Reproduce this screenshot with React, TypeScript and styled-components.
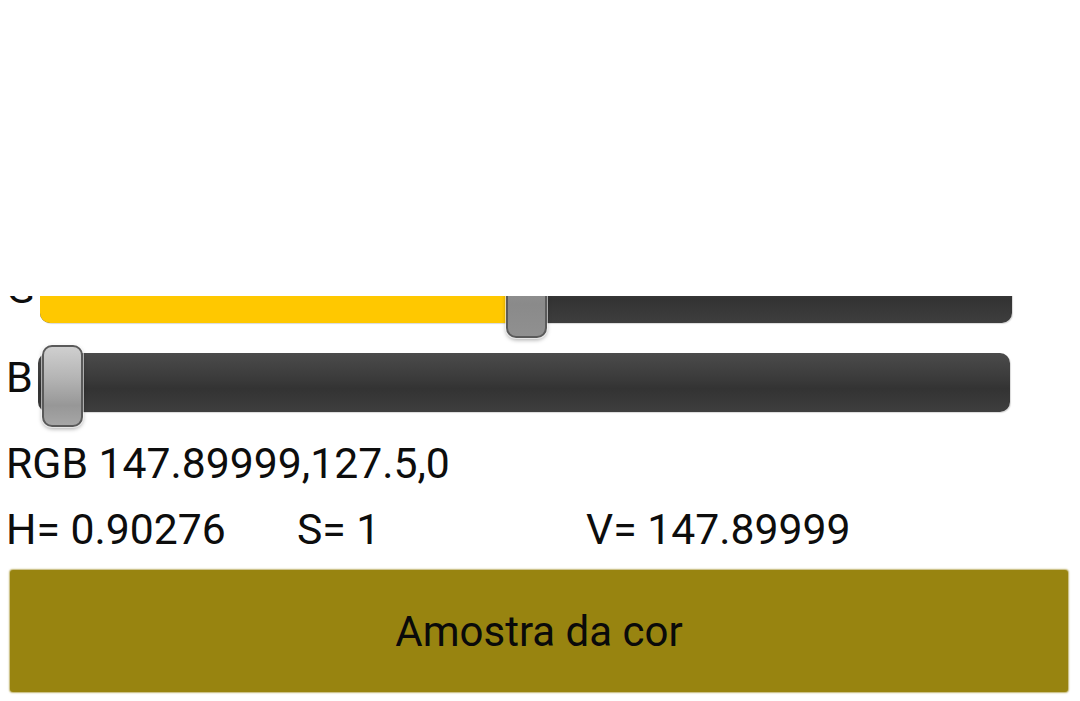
import React from "react";
import styled, { createGlobalStyle } from "styled-components";

const GlobalStyle = createGlobalStyle`
  html, body {
    margin: 0;
    padding: 0;
    background: #ffffff;
  }
  body {
    font-family: Roboto, "Noto Sans", "Liberation Sans", sans-serif;
    color: #0d0d0d;
  }
`;

const Page = styled.div`
  width: 1080px;
  height: 701px;
  display: flex;
  flex-direction: column;
  background: #ffffff;
  overflow: hidden;
`;

const Header = styled.div`
  flex: 0 0 296px;
  background: #ffffff;
`;

const Viewport = styled.div`
  flex: 1 1 auto;
  min-height: 0;
  overflow: hidden;
  display: flex;
  flex-direction: column;
  justify-content: flex-end;
  padding-left: 6px;
`;

const SliderRow = styled.div`
  flex: 0 0 82px;
  display: flex;
  align-items: flex-start;
  margin-bottom: 7px;
`;

const Label = styled.span`
  font-size: 43px;
  line-height: 48px;
  margin-top: 8px;
  margin-right: 5px;
`;

const TrackArea = styled.div`
  position: relative;
  width: 972px;
  height: 82px;
`;

const Track = styled.div`
  position: relative;
  margin-top: 8px;
  width: 972px;
  height: 59px;
  border-radius: 10px;
  overflow: hidden;
  background: linear-gradient(#4b4b4b 0%, #3a3a3a 45%, #333333 60%, #3e3e3e 100%);
  box-shadow: 1px 1px 1px rgba(0, 0, 0, 0.15);
`;

const Fill = styled.div`
  height: 100%;
  background: #ffc800;
`;

const Thumb = styled.div<{ $flat?: boolean }>`
  position: absolute;
  top: 0;
  width: 41px;
  height: 82px;
  box-sizing: border-box;
  border-radius: 10px;
  border: 2px solid #5a5a5a;
  background: ${(p) =>
    p.$flat
      ? "linear-gradient(#9a9a9a, #8a8a8a 60%, #909090)"
      : "linear-gradient(#cfcfcf 0%, #b4b4b4 40%, #979797 75%, #a6a6a6 100%)"};
  box-shadow: 0 0 0 1px rgba(255, 255, 255, 0.6), 0 2px 4px rgba(0, 0, 0, 0.35);
`;

const InfoLine = styled.div<{ $gap: number }>`
  flex: 0 0 48px;
  font-size: 42.7px;
  line-height: 48px;
  margin-top: ${(p) => p.$gap}px;
  white-space: nowrap;
`;

const HsvRow = styled.div`
  flex: 0 0 48px;
  display: grid;
  grid-template-columns: 291px 289px 1fr;
  font-size: 42.7px;
  line-height: 48px;
  margin-top: 18px;
  white-space: nowrap;
`;

const Swatch = styled.div<{ $color: string }>`
  flex: 0 0 122px;
  margin: 17px 12px 9px 4px;
  border-radius: 3px;
  background: ${(p) => p.$color};
  box-shadow: 0 0 1.5px 1px ${(p) => p.$color}99;
  display: flex;
  align-items: center;
  justify-content: center;
  font-size: 42px;
  color: #0a0a0a;
`;

const TRACK_W = 972;
const THUMB_W = 41;
const INSET = 4;

function Slider({ label, value, flat }: { label: string; value: number; flat?: boolean }) {
  const frac = value / 255;
  const left = INSET + frac * (TRACK_W - 2 * INSET - THUMB_W);
  return (
    <SliderRow>
      <Label>{label}</Label>
      <TrackArea>
        <Track>
          <Fill style={{ width: `${frac * TRACK_W}px` }} />
        </Track>
        <Thumb $flat={flat} style={{ left: `${left}px` }} />
      </TrackArea>
    </SliderRow>
  );
}

export default function App() {
  const r = 147.89999;
  const g = 127.5;
  const b = 0;
  return (
    <>
      <GlobalStyle />
      <Page>
        <Header />
        <Viewport>
          <Slider label="G" value={g} flat />
          <Slider label="B" value={b} />
          <InfoLine $gap={5}>RGB {r},{g},{b}</InfoLine>
          <HsvRow>
            <span>H= 0.90276</span>
            <span>S= 1</span>
            <span>V= {r}</span>
          </HsvRow>
          <Swatch $color="#988410">Amostra da cor</Swatch>
        </Viewport>
      </Page>
    </>
  );
}
